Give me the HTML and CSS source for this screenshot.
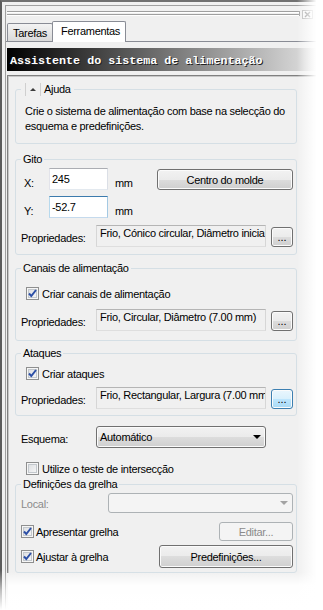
FILE: index.html
```html
<!DOCTYPE html>
<html lang="pt">
<head>
    <meta charset="UTF-8">
    <meta name="viewport" content="width=device-width, initial-scale=1.0">
    <title>Assistente do sistema de alimentação</title>
    <link rel="stylesheet" href="styles.css">
</head>
<body>
    <div class="window">
        <div class="frame">
            <div class="inner">
                <!-- barra de arrasto -->
                <div class="titlebar">
                    <div class="grip"></div>
                    <span class="close">
                        <svg width="9" height="7" viewBox="0 0 9 7"><path d="M2 1 L7 6 M7 1 L2 6" stroke="#8a8a8a" stroke-width="1.4" fill="none"/></svg>
                    </span>
                </div>

                <!-- separadores -->
                <div class="tabs">
                    <span class="tab">Tarefas</span>
                    <span class="tab active">Ferramentas</span>
                </div>

                <div class="tabpage">
                    <div class="banner">Assistente do sistema de alimentação</div>

                    <div class="content">
                        <!-- Ajuda -->
                        <div class="group help">
                            <div class="legend toggle-legend">
                                <span class="toggle"><span class="arrow-up"></span></span>Ajuda
                            </div>
                            <p>Crie o sistema de alimentação com base na selecção do esquema e predefinições.</p>
                        </div>

                        <!-- Gito -->
                        <div class="group gito">
                            <div class="legend">Gito</div>
                            <div class="row first">
                                <span class="axis">X:</span>
                                <span class="field num">245</span>
                                <span class="unit">mm</span>
                                <span class="btn centro">Centro do molde</span>
                            </div>
                            <div class="row y-row">
                                <span class="axis">Y:</span>
                                <span class="field num focus">-52.7</span>
                                <span class="unit">mm</span>
                            </div>
                            <div class="row props">
                                <span class="plabel">Propriedades:</span>
                                <span class="prop-field">Frio, Cónico circular, Diâmetro inicial</span>
                                <span class="btn dots">...</span>
                            </div>
                        </div>

                        <!-- Canais de alimentação -->
                        <div class="group canais">
                            <div class="legend">Canais de alimentação</div>
                            <div class="checkrow">
                                <span class="check on"><svg width="11" height="11" viewBox="0 0 11 11"><path d="M2 5.5 L4.3 8 L9 2" stroke="#2c4fa6" stroke-width="2" fill="none"/></svg></span>
                                <span class="clabel">Criar canais de alimentação</span>
                            </div>
                            <div class="row props">
                                <span class="plabel">Propriedades:</span>
                                <span class="prop-field">Frio, Circular, Diâmetro (7.00 mm)</span>
                                <span class="btn dots">...</span>
                            </div>
                        </div>

                        <!-- Ataques -->
                        <div class="group ataques">
                            <div class="legend">Ataques</div>
                            <div class="checkrow">
                                <span class="check on"><svg width="11" height="11" viewBox="0 0 11 11"><path d="M2 5.5 L4.3 8 L9 2" stroke="#2c4fa6" stroke-width="2" fill="none"/></svg></span>
                                <span class="clabel">Criar ataques</span>
                            </div>
                            <div class="row props">
                                <span class="plabel">Propriedades:</span>
                                <span class="prop-field">Frio, Rectangular, Largura (7.00 mm)</span>
                                <span class="btn dots hot">...</span>
                            </div>
                        </div>

                        <!-- Esquema -->
                        <div class="row esquema">
                            <span class="plabel">Esquema:</span>
                            <span class="combo">Automático<span class="arrow-down"></span></span>
                        </div>

                        <div class="checkrow intersect">
                            <span class="check"></span>
                            <span class="clabel">Utilize o teste de intersecção</span>
                        </div>

                        <!-- Definições da grelha -->
                        <div class="group grelha">
                            <div class="legend">Definições da grelha</div>
                            <div class="row local">
                                <span class="llabel">Local:</span>
                                <span class="combo disabled"><span class="arrow-down"></span></span>
                            </div>
                            <div class="row grid-row show">
                                <span class="check on"><svg width="11" height="11" viewBox="0 0 11 11"><path d="M2 5.5 L4.3 8 L9 2" stroke="#2c4fa6" stroke-width="2" fill="none"/></svg></span>
                                <span class="clabel">Apresentar grelha</span>
                                <span class="btn disabled editar">Editar...</span>
                            </div>
                            <div class="row grid-row snap">
                                <span class="check on"><svg width="11" height="11" viewBox="0 0 11 11"><path d="M2 5.5 L4.3 8 L9 2" stroke="#2c4fa6" stroke-width="2" fill="none"/></svg></span>
                                <span class="clabel">Ajustar à grelha</span>
                                <span class="btn predef">Predefinições...</span>
                            </div>
                        </div>
                    </div>
                </div>
            </div>
        </div>

        <!-- esbatimento das margens -->
        <div class="fade-right"></div>
        <div class="fade-bottom"></div>
        <div class="fade-edge"></div>
    </div>
</body>
</html>
```

FILE: styles.css
```css
/* base */
* {
    box-sizing: border-box;
}

body {
    margin: 0;
    font-family: "Liberation Sans", Arial, sans-serif;
    font-size: 11px;
    letter-spacing: -0.3px;
    color: #000;
    background: #fff;
}

.window {
    position: relative;
    width: 323px;
    height: 610px;
    overflow: hidden;
}

.frame {
    height: 610px;
    border-left: 2px solid #5c5c5c;
    border-top: 2px solid #707070;
    background: #f0f0f0;
    padding: 3px 0 0 3px;
}

.inner {
    height: 100%;
    border-left: 1px solid #a0a0a0;
    border-top: 1px solid #a0a0a0;
}

/* barra de arrasto */
.titlebar {
    display: flex;
    height: 15px;
}

.grip {
    width: 293px;
    height: 5px;
    margin: 5px 0 0 1px;
    border-right: 1px solid #a0a0a0;
    background: linear-gradient(#a0a0a0 0 1px, #fff 1px 2px, transparent 2px 3px, #a0a0a0 3px 4px, #fff 4px 5px);
}

.close {
    display: flex;
    align-items: center;
    justify-content: center;
    width: 11px;
    height: 9px;
    margin: 4px 0 0 2px;
    border: 1px solid #b4b4b4;
    background: #f7f7f7;
}

/* separadores */
.tabs {
    display: flex;
    align-items: flex-end;
    height: 20px;
    padding-left: 1px;
}

.tab {
    width: 46px;
    height: 18px;
    padding: 1px 0 0 5px;
    border: 1px solid #898c95;
    border-bottom: none;
    border-radius: 2px 2px 0 0;
    background: linear-gradient(#f3f3f3, #dadada);
    line-height: 16px;
}

.tab.active {
    position: relative;
    width: 74px;
    height: 21px;
    margin: 0 0 -1px -1px;
    padding-left: 8px;
    background: #fff;
}

.tabpage {
    border-top: 1px solid #898c95;
    padding-top: 6px;
}

.banner {
    height: 23px;
    margin-left: 1px;
    padding: 4px 0 0 3px;
    background: linear-gradient(90deg, #000 0%, #e6e6e6 100%);
    color: #fff;
    font-family: "Liberation Mono", "Courier New", monospace;
    font-weight: bold;
    font-size: 11.7px;
    letter-spacing: 0;
    line-height: 19px;
    white-space: nowrap;
    text-shadow: 1px 1px 0 #222;
}

.content {
    margin: 4px 0 0 1px;
    padding-left: 7px;
    border-top: 1px solid #808080;
    border-left: 1px solid #808080;
    box-shadow: inset 1px 1px 0 #c8c8c8;
}

/* caixas de grupo */
.group {
    width: 282px;
    padding: 0 3px 0 5px;
    border: 1px solid #d5dfe5;
    border-radius: 3px;
}

.legend {
    width: fit-content;
    margin-top: -8px;
    padding: 0 2px;
    line-height: 14px;
    background: #f0f0f0;
}

.toggle-legend {
    display: flex;
    align-items: center;
    padding-right: 3px;
}

.toggle {
    display: flex;
    align-items: center;
    justify-content: center;
    width: 16px;
    height: 13px;
    margin: 0 3px 0 2px;
    border-left: 1px solid #cfcfcf;
    border-right: 1px solid #cfcfcf;
}

.arrow-up {
    width: 0;
    height: 0;
    border-left: 3px solid transparent;
    border-right: 3px solid transparent;
    border-bottom: 3px solid #3c3c3c;
}

.help {
    margin-top: 13px;
    padding-bottom: 9px;
}

.help p {
    margin: 8px 0 0 4px;
    line-height: 15px;
}

.gito {
    margin-top: 15px;
    padding-bottom: 7px;
}

.canais {
    margin-top: 13px;
    padding-bottom: 9px;
}

.ataques {
    margin-top: 12px;
    padding-bottom: 6px;
}

.grelha {
    margin-top: 9px;
    padding-bottom: 4px;
}

/* linhas */
.row {
    display: flex;
    align-items: flex-start;
    height: 22px;
}

.row.first {
    margin-top: 2px;
}

.row.y-row {
    margin-top: 6px;
}

.row.props {
    margin-top: 7px;
}

.canais .row.props {
    margin-top: 9px;
}

.axis {
    width: 28px;
    margin-top: 8px;
    padding-left: 3px;
    line-height: 14px;
}

.unit {
    margin: 8px 0 0 7px;
    line-height: 14px;
}

.plabel {
    width: 75px;
    margin-top: 6px;
    line-height: 14px;
}

.field {
    height: 22px;
    padding: 0 2px;
    border: 1px solid;
    border-color: #abadb3 #dbdfe6 #e3e9ef #e2e3ea;
    background: #fff;
    line-height: 20px;
}

.field.num {
    width: 59px;
}

.field.focus {
    border-color: #3d7bad #a4c9e3 #c5daed #b7d9ed;
}

.prop-field {
    width: 170px;
    height: 22px;
    padding: 1px 3px 0;
    border: 1px solid;
    border-color: #b5b5b5 #d6d6d6 #dedede #d6d6d6;
    background: #f0f0f0;
    line-height: 12px;
    white-space: nowrap;
    overflow: hidden;
}

/* botões */
.btn {
    display: flex;
    align-items: center;
    justify-content: center;
    border: 1px solid #707070;
    border-radius: 3px;
    background: linear-gradient(#f2f2f2 0%, #ebebeb 50%, #dddddd 50%, #cfcfcf 100%);
    box-shadow: inset 0 0 0 1px #fbfbfb;
    white-space: nowrap;
}

.btn.hot {
    border-color: #3c7fb1;
    background: linear-gradient(#eaf6fd 0%, #d9f0fc 50%, #bee6fd 50%, #a7d9f5 100%);
}

.btn.disabled {
    border-color: #adb2b5;
    background: #f4f4f4;
    box-shadow: none;
    color: #8b8b8b;
}

.centro {
    width: 136px;
    height: 21px;
    margin: 1px 0 0 auto;
}

.dots {
    width: 22px;
    height: 20px;
    margin: 2px 0 0 auto;
    align-items: flex-start;
    line-height: 18px;
    letter-spacing: 0;
}

.editar {
    width: 74px;
    height: 19px;
    margin-left: auto;
}

.predef {
    width: 134px;
    height: 23px;
    margin-left: auto;
}

/* listas */
.esquema {
    margin: 10px 0 0 6px;
}

.combo {
    display: flex;
    align-items: center;
    width: 170px;
    height: 22px;
    padding: 0 3px;
    border: 1px solid #707070;
    border-radius: 3px;
    background: linear-gradient(#f2f2f2 0%, #ebebeb 50%, #dddddd 50%, #cfcfcf 100%);
    box-shadow: inset 0 0 0 1px #fbfbfb;
}

.arrow-down {
    width: 0;
    height: 0;
    margin: 0 1px 0 auto;
    border-left: 4px solid transparent;
    border-right: 4px solid transparent;
    border-top: 4px solid #000;
}

.combo.disabled {
    width: 185px;
    height: 20px;
    border-color: #adb2b5;
    background: #f4f4f4;
    box-shadow: none;
}

.combo.disabled .arrow-down {
    border-top-color: #a3a3a3;
}

.local {
    height: 20px;
    margin-top: 2px;
}

.llabel {
    width: 87px;
    margin-top: 4px;
    line-height: 14px;
    color: #8b8b8b;
}

/* caixas de verificação */
.checkrow {
    display: flex;
    align-items: center;
    height: 13px;
    padding-left: 5px;
}

.canais .checkrow {
    margin-top: 12px;
}

.ataques .checkrow {
    margin-top: 7px;
}

.intersect {
    margin-top: 14px;
    padding-left: 11px;
}

.check {
    display: flex;
    align-items: center;
    justify-content: center;
    width: 13px;
    height: 13px;
    flex-shrink: 0;
    border: 1px solid #8e8f8f;
    background: linear-gradient(135deg, #d9dbde, #fafafa);
    box-shadow: inset 0 0 0 1px #f6f6f6, inset 0 0 0 2px #c3c8cd;
}

.clabel {
    margin-left: 3px;
    line-height: 14px;
}

.grid-row {
    align-items: center;
}

.grid-row .clabel {
    margin-left: 2px;
}

.grid-row.show {
    height: 19px;
    margin-top: 9px;
}

.grid-row.snap {
    height: 23px;
    margin-top: 4px;
}

/* esbatimento */
.fade-right {
    position: absolute;
    top: 0;
    right: 0;
    width: 26px;
    height: 100%;
    background: linear-gradient(90deg, rgba(255, 255, 255, 0) 0%, #fff 75%);
}

.fade-bottom {
    position: absolute;
    left: 8px;
    bottom: 0;
    width: 315px;
    height: 38px;
    background: linear-gradient(rgba(255, 255, 255, 0) 0%, rgba(255, 255, 255, 0.95) 35%, #fff 100%);
}

.fade-edge {
    position: absolute;
    left: 0;
    bottom: 0;
    width: 8px;
    height: 40px;
    background: linear-gradient(rgba(255, 255, 255, 0) 0%, rgba(255, 255, 255, 0.6) 50%, #fff 100%);
}
```
